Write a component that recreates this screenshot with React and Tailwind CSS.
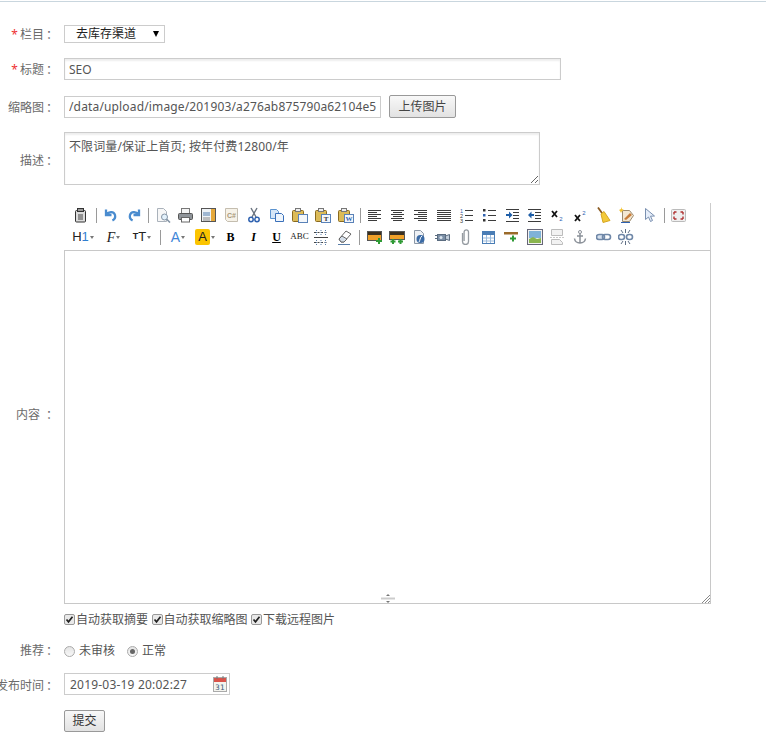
import { useState } from "react";

const font = "font-['Noto_Sans','Noto_Sans_CJK_SC',sans-serif]";

const lines = (rows) =>
  rows.map(([x1, x2, y], i) => <path key={i} d={`M${x1} ${y + 0.5}H${x2}`} stroke="#3c3c3c" />);

const Paper = ({ fold = "#fff" }) => (
  <path d="M2.500 1.500h6l3 3v10h-9z" fill={fold} stroke="#aab2bb" />
);

const Clip = ({ badge }) => (
  <>
    <rect x="0.500" y="3.500" width="11" height="11" rx="1" fill="#dcbb58" stroke="#8a6a1f" />
    <rect x="3.500" y="1.500" width="5" height="3" fill="#eee" stroke="#777" />
    <rect x="6.500" y="7.500" width="9" height="8" fill="#f4f7fb" stroke="#5a82b8" />
    {badge}
  </>
);

const icons = {
  source: (
    <>
      <rect x="2.500" y="3.500" width="10" height="11.500" rx="1" fill="#dcdcdc" stroke="#333" />
      <rect x="4.500" y="1.500" width="6" height="3" fill="#999" stroke="#333" />
      <path d="M5 8h5M5 10h5M5 12h5" stroke="#444" />
    </>
  ),
  undo: <path d="M3 2.500v5.500h5.500M3.500 7.500C6 4 11 4.500 12 8c.6 2.400-.6 4.500-2.600 5.500" fill="none" stroke="#4a8ccf" strokeWidth="2.300" />,
  redo: <path d="M13 2.500v5.500H7.500M12.500 7.500C10 4 5 4.500 4 8c-.6 2.400.6 4.500 2.600 5.500" fill="none" stroke="#4a8ccf" strokeWidth="2.300" />,
  preview: (
    <>
      <Paper fold="#f7f7f7" />
      <circle cx="9.500" cy="10" r="3" fill="#e3f1fb" stroke="#8494a5" />
      <path d="M11.500 12l3.500 3.500" stroke="#8494a5" strokeWidth="1.600" />
    </>
  ),
  print: (
    <>
      <rect x="3.500" y="1.500" width="8" height="5" fill="#f4f4f4" stroke="#777" />
      <rect x="0.500" y="6.500" width="14" height="6" rx="1" fill="#8f9499" stroke="#555" />
      <rect x="3.500" y="10.500" width="8" height="4.500" fill="#fff" stroke="#666" />
    </>
  ),
  template: (
    <>
      <rect x="0.500" y="1.500" width="14" height="13" fill="#eef2f6" stroke="#555" />
      <rect x="10" y="2" width="4" height="12" fill="#e5a83a" />
      <rect x="2" y="5" width="7" height="4" fill="#9fb7d2" />
      <path d="M2 11h7M2 13h7" stroke="#888" />
    </>
  ),
  code: (
    <>
      <path d="M1.500 1.500h12v13h-10l-2-2z" fill="#f6f2e8" stroke="#c4bdaf" />
      <text x="7.500" y="11" textAnchor="middle" fontSize="7" fontWeight="700" fill="#a89878" fontFamily="Liberation Sans">C#</text>
    </>
  ),
  cut: (
    <>
      <path d="M5 1l5 9M11 1l-5 9" stroke="#6b7480" strokeWidth="1.400" />
      <circle cx="5" cy="12.500" r="2.200" fill="none" stroke="#2f62b0" strokeWidth="1.500" />
      <circle cx="11" cy="12.500" r="2.200" fill="none" stroke="#2f62b0" strokeWidth="1.500" />
    </>
  ),
  copy: (
    <>
      <path d="M1.500 2.500h6l2 2v7h-8z" fill="#d5e6f7" stroke="#5b93cf" />
      <path d="M6.500 6.500h6l2 2v6h-8z" fill="#eef5fc" stroke="#3a70ba" />
    </>
  ),
  paste: <Clip />,
  pasteText: <Clip badge={<text x="11" y="14" textAnchor="middle" fontSize="7" fontWeight="700" fill="#333" fontFamily="Liberation Serif">T</text>} />,
  pasteWord: <Clip badge={<text x="11" y="14" textAnchor="middle" fontSize="7" fontWeight="700" fill="#2f62b0" fontFamily="Liberation Serif">W</text>} />,
  left: <g>{lines([[1, 14, 3], [1, 10, 5], [1, 14, 7], [1, 10, 9], [1, 14, 11], [1, 10, 13]])}</g>,
  center: <g>{lines([[1, 14, 3], [3, 12, 5], [1, 14, 7], [3, 12, 9], [1, 14, 11], [3, 12, 13]])}</g>,
  right: <g>{lines([[1, 14, 3], [5, 14, 5], [1, 14, 7], [5, 14, 9], [1, 14, 11], [5, 14, 13]])}</g>,
  justify: <g>{lines([[1, 15, 3], [1, 15, 5], [1, 15, 7], [1, 15, 9], [1, 15, 11], [1, 15, 13]])}</g>,
  ol: (
    <>
      {lines([[6, 14, 3], [6, 14, 8], [6, 14, 13]])}
      <text x="2.500" y="6" textAnchor="middle" fontSize="5.500" fill="#2f62b0" fontFamily="Liberation Sans">1</text>
      <text x="2.500" y="11" textAnchor="middle" fontSize="5.500" fill="#333" fontFamily="Liberation Sans">2</text>
      <text x="2.500" y="16" textAnchor="middle" fontSize="5.500" fill="#333" fontFamily="Liberation Sans">3</text>
    </>
  ),
  ul: (
    <>
      {lines([[6, 14, 3], [6, 14, 8], [6, 14, 13]])}
      <rect x="1" y="2" width="2.500" height="2.500" fill="#333" />
      <rect x="1" y="7" width="2.500" height="2.500" fill="#2f62b0" />
      <rect x="1" y="12" width="2.500" height="2.500" fill="#333" />
    </>
  ),
  indent: (
    <>
      {lines([[1, 14, 2], [8, 14, 5], [8, 14, 8], [8, 14, 11], [1, 14, 14]])}
      <path d="M1 7h3V4.500L7.500 8 4 11.500V9H1z" fill="#1f5fa8" />
    </>
  ),
  outdent: (
    <>
      {lines([[1, 14, 2], [8, 14, 5], [8, 14, 8], [8, 14, 11], [1, 14, 14]])}
      <path d="M7 7H4.500V4.500L1 8l3.500 3.500V9H7z" fill="#1f5fa8" />
    </>
  ),
  sub: (
    <>
      <path d="M2 4l5 6M7 4l-5 6" stroke="#111" strokeWidth="1.800" />
      <text x="11" y="14" textAnchor="middle" fontSize="6" fill="#2f62b0" fontFamily="Liberation Sans">2</text>
    </>
  ),
  sup: (
    <>
      <path d="M2 8l5 6M7 8l-5 6" stroke="#111" strokeWidth="1.800" />
      <text x="11" y="8" textAnchor="middle" fontSize="6" fill="#2f62b0" fontFamily="Liberation Sans">2</text>
    </>
  ),
  brush: (
    <>
      <path d="M2 0.500l5 7" stroke="#8a5a20" strokeWidth="1.800" />
      <path d="M5 7l3-2.500 6 9-7 2z" fill="#f3c93a" stroke="#d6a624" />
    </>
  ),
  autoformat: (
    <>
      <path d="M3.500 3.500h7l4 5-4 6h-7z" fill="#f3e7d2" stroke="#9b8a6e" />
      <path d="M2 0l1 2 2 1-2 1-1 2-1-2-1-1 2-1z" fill="#f3c230" />
      <path d="M5 12l6-6 2 2-6 5z" fill="#c77c3a" />
      <path d="M2 15.500h9" stroke="#2f62b0" />
    </>
  ),
  select: <path d="M3.500 1.500v11l3-2.500 2 4.500 2-1-2-4.300 4-.2z" fill="#e6eefa" stroke="#7a90b0" />,
  full: (
    <>
      <rect x="0.500" y="2.500" width="14" height="12" rx="1" fill="#efefef" stroke="#bbb" />
      <path d="M3 5h2.500M3 5v2.500M12 5H9.500M12 5v2.500M3 12h2.500M3 12V9.500M12 12H9.500M12 12V9.500" stroke="#b03030" strokeWidth="1.400" fill="none" />
    </>
  ),
  clear: (
    <>
      <path d="M2 10l7-8 5 3-7 8H4z" fill="#fff" stroke="#666" />
      <path d="M2 10l3-3 5 3-3 3H4z" fill="#d5dfea" stroke="#666" />
      <path d="M1 15.500h12" stroke="#5a7ea8" />
    </>
  ),
  table2: (
    <>
      <path d="M0 3.500h14M0 13.500h14" stroke="#444" strokeDasharray="2 1.500" fill="none" />
      <path d="M0 8.500h14" stroke="#444" />
      <path d="M2.500 1v5M7 1v5M11.500 1v5M2.500 11v5M7 11v5M11.500 11v5" stroke="#5a7ea8" strokeDasharray="1 1" />
    </>
  ),
  imgAdd: (
    <>
      <rect x="0.500" y="2.500" width="14" height="9" fill="#f0a028" stroke="#555" />
      <rect x="1" y="3" width="13" height="3" fill="#3a3020" />
      <path d="M12 9v6M9 12h6" stroke="#2f9a35" strokeWidth="2" />
    </>
  ),
  imgsAdd: (
    <>
      <rect x="0.500" y="2.500" width="15" height="8" fill="#f0a028" stroke="#555" />
      <rect x="1" y="3" width="14" height="3" fill="#3a3020" />
      <path d="M4 10v5M1.500 12.500h5M11.500 10v5M9 12.500h5" stroke="#2f9a35" strokeWidth="2" />
    </>
  ),
  flash: (
    <>
      <path d="M2.500 1.500h6l3 3v10h-9z" fill="#eef1f5" stroke="#8b97a6" />
      <circle cx="8.500" cy="10" r="4" fill="#3a6aa5" />
      <path d="M7 13c1-1 1-5 3-6" stroke="#fff" fill="none" />
    </>
  ),
  video: (
    <>
      <rect x="2.500" y="5.500" width="8" height="6" fill="#7b8fa6" stroke="#5b6c80" />
      <path d="M10.500 7l4-1.500v6l-4-1.500z" fill="#c3cfdc" stroke="#5b6c80" />
      <path d="M0 6.500h2.500M0 9.500h2.500" stroke="#5b6c80" />
      <circle cx="6" cy="8.500" r="1.500" fill="#dbe5ef" />
    </>
  ),
  attach: <path d="M4.500 4v8.500a3 3 0 0 0 6 0V3a2.200 2.200 0 0 0-4.400 0v9" fill="none" stroke="#959ba1" strokeWidth="1.300" />,
  table: (
    <>
      <rect x="1.500" y="2.500" width="12" height="12" fill="#fff" stroke="#4a7db5" />
      <rect x="2" y="3" width="11" height="3" fill="#4a7db5" />
      <path d="M2 9h11M2 12h11M5.500 6v8M9.500 6v8" stroke="#9cbbdc" />
    </>
  ),
  hr: (
    <>
      <rect x="0" y="3" width="14" height="2.500" fill="#9a6a2a" />
      <path d="M9 6.500v6M6 9.500h6" stroke="#2f9a35" strokeWidth="2" />
    </>
  ),
  image: (
    <>
      <rect x="0.500" y="0.500" width="15" height="15" fill="#f2f2f2" stroke="#667" />
      <rect x="2" y="2" width="12" height="7" fill="#7fb2d8" />
      <path d="M2 14V10l4-2 4 2 4-1v5z" fill="#8ab54f" />
    </>
  ),
  pagebreak: (
    <>
      <path d="M1.500 0.500h11v6h-11zM1.500 10.500h8l3 3v2h-11z" fill="#f2f2f2" stroke="#bcbcbc" />
      <path d="M0 8.500h14" stroke="#c8c8c8" strokeDasharray="2 1" />
    </>
  ),
  anchor: (
    <>
      <circle cx="7" cy="3" r="1.500" fill="none" stroke="#8b9199" />
      <path d="M7 4.500V14M4 7h6M1.500 9.500C2 13 5 14 7 14s5-1 5.500-4.500" fill="none" stroke="#8b9199" strokeWidth="1.500" />
    </>
  ),
  link: (
    <>
      <rect x="0.500" y="5.500" width="8" height="5" rx="2.500" fill="#d7e2ef" stroke="#7088a8" strokeWidth="1.600" />
      <rect x="6.500" y="5.500" width="8" height="5" rx="2.500" fill="none" stroke="#7088a8" strokeWidth="1.600" />
    </>
  ),
  unlink: (
    <>
      <rect x="0.500" y="5.500" width="6" height="5" rx="2.500" fill="none" stroke="#7088a8" strokeWidth="1.600" />
      <rect x="8.500" y="5.500" width="6" height="5" rx="2.500" fill="none" stroke="#7088a8" strokeWidth="1.600" />
      <path d="M3 1l2 3M12 1l-2 3M7.500 0v4M3 15l2-3M12 15l-2-3M7.500 16v-4" stroke="#5f6f85" />
    </>
  ),
};

function Tool({ name }) {
  return (
    <span className="flex h-[20px] w-[22.9px] shrink-0 items-center justify-center">
      <svg width="16" height="16" viewBox="0 0 16 16">{icons[name]}</svg>
    </span>
  );
}

const Sep = () => (
  <span className="mx-[2.7px] h-[15px] w-px shrink-0 bg-[#9a9a9a]" />
);

const Caret = () => (
  <span className="ml-px mt-px h-0 w-0 border-x-[2.5px] border-t-[3px] border-x-transparent border-t-[#777]" />
);

function TextTool({ className, children, caret }) {
  return (
    <span className={`flex h-[20px] shrink-0 items-center justify-center ${className}`}>
      {children}
      {caret && <Caret />}
    </span>
  );
}

function Row({ label, required, className = "", labelClass = "pt-[2px]", children }) {
  return (
    <div className={`flex ${className}`}>
      <div className={`flex w-[59px] shrink-0 items-center justify-end whitespace-nowrap text-[12px] text-[#6b6b6b] ${labelClass}`}>
        {required && <span className="mr-[2px] text-[#e33]">*</span>}
        {label}
        <span className="ml-[2px] mr-[1px]">：</span>
      </div>
      <div className="ml-[5px] flex min-w-0 flex-1 items-center">{children}</div>
    </div>
  );
}

const fieldCls =
  "border border-[#ccc] bg-white px-[4px] text-[12px] text-[#555] shadow-[inset_0_2px_2px_rgba(0,0,0,0.07)] outline-none";

const row1a = ["undo", "redo"];
const row1b = ["preview", "print", "template", "code", "cut", "copy", "paste", "pasteText", "pasteWord"];
const row1c = ["left", "center", "right", "justify", "ol", "ul", "indent", "outdent", "sub", "sup", "brush", "autoformat", "select"];
const row2b = ["imgAdd", "imgsAdd", "flash", "video", "attach", "table", "hr", "image", "pagebreak", "anchor", "link", "unlink"];

function Toolbar() {
  return (
    <div className="h-[47px] border-r border-[#ccc] pl-[6px] pt-[1px]">
      <div className="flex h-[22px] items-center">
        <Tool name="source" />
        <Sep />
        {row1a.map((n) => <Tool key={n} name={n} />)}
        <Sep />
        {row1b.map((n) => <Tool key={n} name={n} />)}
        <Sep />
        {row1c.map((n) => <Tool key={n} name={n} />)}
        <Sep />
        <Tool name="full" />
      </div>
      <div className="flex h-[22px] items-center font-['Liberation_Sans',sans-serif] text-[#222]">
        <TextTool className="w-[24px] pl-[2px] text-[13px]" caret>
          H<span className="text-[#2f7fd0]">1</span>
        </TextTool>
        <TextTool className="ml-[9px] w-[21px] font-['Liberation_Serif',serif] text-[14px] italic" caret>
          F
        </TextTool>
        <TextTool className="ml-[7px] w-[22px] text-[13px]" caret>
          <span className="text-[9px] font-bold">T</span>T
        </TextTool>
        <span className="ml-[7px] mr-[8px] h-[15px] w-px shrink-0 bg-[#9a9a9a]" />
        <TextTool className="w-[18px] text-[14px] text-[#3f86d8]" caret>A</TextTool>
        <TextTool className="ml-[7px] w-[22px] text-[13px]" caret>
          <span className="flex h-[16px] w-[15px] items-center justify-center rounded-[2px] bg-[#fbc400]">A</span>
        </TextTool>
        <TextTool className="ml-[3px] w-[23px] font-['Liberation_Serif',serif] text-[12px] font-bold text-black">B</TextTool>
        <TextTool className="w-[23px] font-['Liberation_Serif',serif] text-[12px] font-bold italic text-black">I</TextTool>
        <TextTool className="w-[23px] font-['Liberation_Serif',serif] text-[12px] font-bold text-black underline">U</TextTool>
        <TextTool className="w-[23px] font-['Liberation_Serif',serif] text-[9px]">ABC</TextTool>
        <Tool name="table2" />
        <Tool name="clear" />
        <Sep />
        {row2b.map((n) => <Tool key={n} name={n} />)}
      </div>
    </div>
  );
}

function ResizeGrip() {
  return (
    <svg width="9" height="9" viewBox="0 0 9 9" className="absolute bottom-0 right-0">
      <path d="M1 9l8-8M4 9l5-5M7 9l2-2" stroke="#888" />
    </svg>
  );
}

function Check({ label }) {
  return (
    <label className="flex items-center">
      <span className="flex h-[11px] w-[11px] items-center justify-center rounded-[2px] border border-[#999] bg-[#e9e9e9]">
        <svg width="9" height="9" viewBox="0 0 9 9">
          <path d="M1.500 4.500l2 2.300 4-5" fill="none" stroke="#222" strokeWidth="1.700" />
        </svg>
      </span>
      <span className="ml-px">{label}</span>
    </label>
  );
}

function Radio({ label, checked, className = "" }) {
  return (
    <label className={`flex items-center ${className}`}>
      <span className="flex h-[11px] w-[11px] items-center justify-center rounded-full border border-[#aaa] bg-gradient-to-b from-[#e4e4e4] to-[#f8f8f8]">
        {checked && <span className="h-[5px] w-[5px] rounded-full bg-[#666]" />}
      </span>
      <span className="ml-[4px]">{label}</span>
    </label>
  );
}

export default function App() {
  const [title, setTitle] = useState("SEO");

  return (
    <div className={`h-[742px] w-[766px] overflow-hidden bg-white text-[12px] text-[#555] ${font}`}>
      <div className="h-[2px] border-b border-[#c9d6de]" />

      <Row label="栏目" required className="mt-[23px] h-[18px]">
        <div className="relative flex h-[18px] w-[101px] items-center border border-[#ccc] pl-[11px] text-[12px] text-[#222]">
          去库存渠道
          <span className="absolute right-[5px] top-[5px] h-0 w-0 border-x-[3.5px] border-t-[6px] border-x-transparent border-t-black" />
        </div>
      </Row>

      <Row label="标题" required className="mt-[15px] h-[22px]">
        <input
          className={`${fieldCls} h-[22px] w-[497px]`}
          value={title}
          onChange={(e) => setTitle(e.target.value)}
        />
      </Row>

      <Row label="缩略图" className="mt-[15px] h-[23px]">
        <input
          className={`${fieldCls} h-[22px] w-[317px] tracking-[0.15px] shadow-none`}
          readOnly
          value="/data/upload/image/201903/a276ab875790a62104e54f3b.png"
        />
        <button className="ml-[8px] h-[23px] w-[67px] rounded-[2px] border border-[#999] bg-gradient-to-b from-[#f8f8f8] to-[#e2e2e2] text-[12px] text-[#444]">
          上传图片
        </button>
      </Row>

      <Row label="描述" labelClass="pt-[4px]" className="mt-[14px] h-[53px]">
        <textarea
          className={`${fieldCls} h-[53px] w-[476px] resize py-[5px] leading-[18px] tracking-[0.1px]`}
          readOnly
          value="不限词量/保证上首页; 按年付费12800/年"
        />
      </Row>

      <Row label={<span className="mr-[4px]">内容</span>} labelClass="" className="mt-[18px] h-[424px]">
        <div className="w-[647px] self-start">
          <Toolbar />
          <div className="relative h-[354px] border border-[#c8c8c8] bg-white">
            <svg width="16" height="9" viewBox="0 0 16 9" className="absolute bottom-0 left-[315px]">
              <path d="M1 4.500h14" stroke="#ccc" strokeWidth="2" />
              <path d="M8 0l-2 2h4zM8 9l-2-2h4z" fill="#777" />
            </svg>
            <ResizeGrip />
          </div>
          <div className="mt-[7px] flex h-[17px] items-center gap-[3.5px]">
            <Check label="自动获取摘要" />
            <Check label="自动获取缩略图" />
            <Check label="下载远程图片" />
          </div>
        </div>
      </Row>

      <Row label="推荐" labelClass="" className="mt-[15px] h-[18px]">
        <Radio label="未审核" />
        <Radio label="正常" checked className="ml-[12px]" />
      </Row>

      <Row label="发布时间" labelClass="pt-[4px]" className="mt-[13px] h-[22px]">
        <div className="flex h-[22px] w-[166px] items-center justify-between border border-[#ccc] pl-[5px] pr-[2px] tracking-[0.2px]">
          <span className="pt-px">2019-03-19 20:02:27</span>
          <svg width="15" height="16" viewBox="0 0 15 16">
            <rect x="1.500" y="1.500" width="13" height="14" fill="#f4f4ee" stroke="#aaa" />
            <rect x="2" y="2" width="12" height="4" fill="#d9534a" />
            <path d="M5 0v3M11 0v3" stroke="#777" />
            <text x="8" y="13.500" textAnchor="middle" fontSize="7.500" fill="#3a5a7a" fontFamily="DejaVu Sans">31</text>
          </svg>
        </div>
      </Row>

      <button className="ml-[64px] mt-[15px] h-[22px] w-[41px] rounded-[2px] border border-[#999] bg-gradient-to-b from-[#f8f8f8] to-[#e2e2e2] text-[12px] text-[#333]">
        提交
      </button>
    </div>
  );
}
